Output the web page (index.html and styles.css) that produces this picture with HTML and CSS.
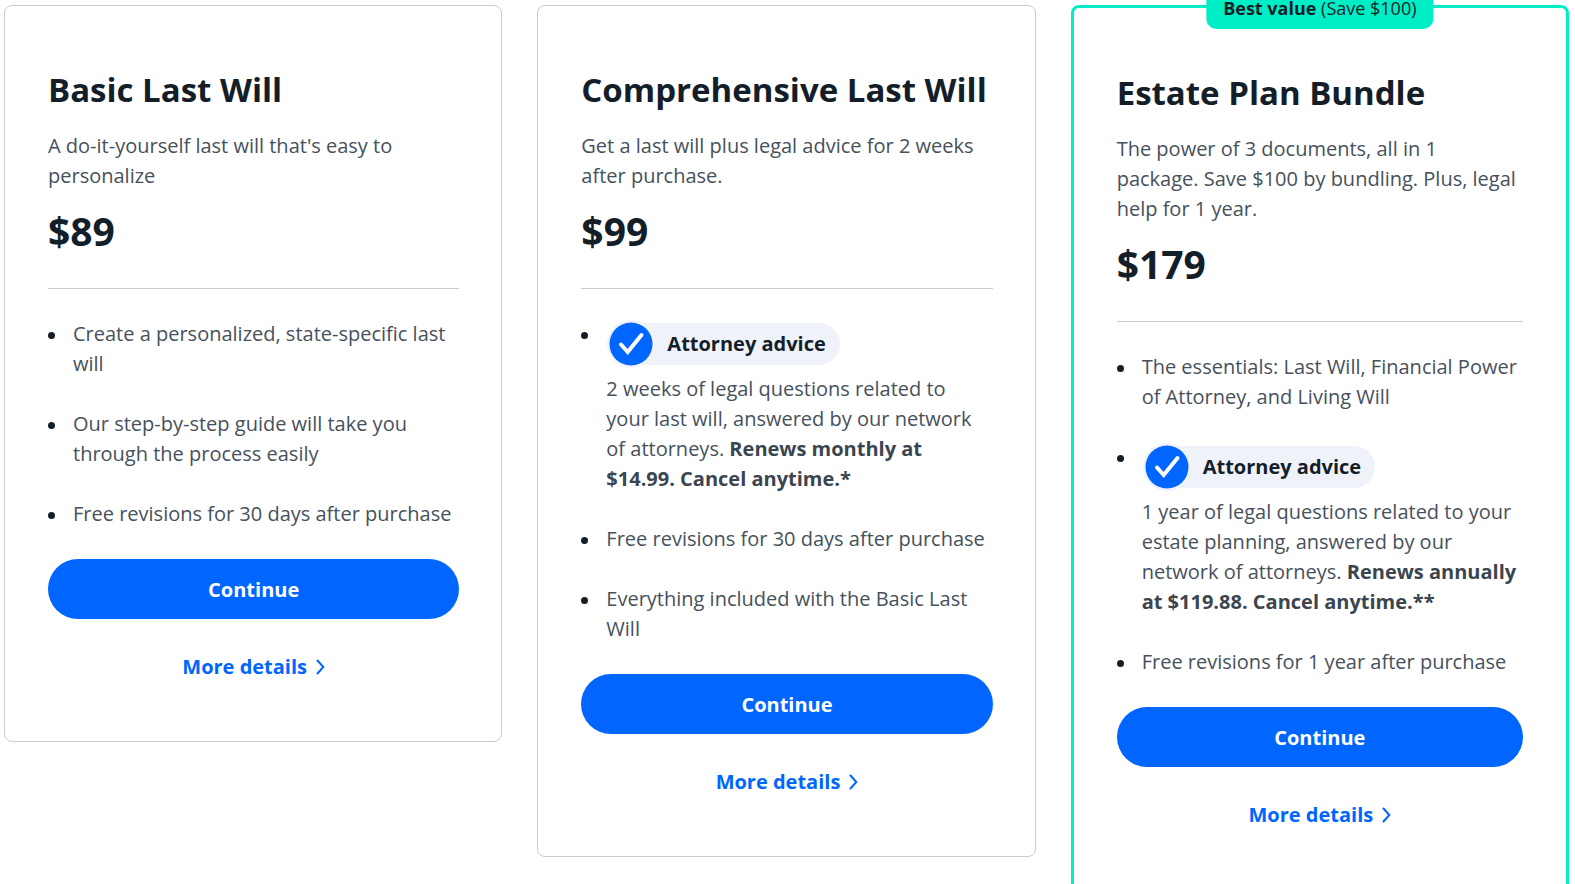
FILE: index.html
```html
<!DOCTYPE html>
<html lang="en">
<head>
    <meta charset="UTF-8">
    <meta name="viewport" content="width=device-width, initial-scale=1.0">
    <title>Last Will Pricing</title>
    <link rel="stylesheet" href="styles.css">
</head>
<body>

    <main class="pricing">
        <section class="card">
            <h2>Basic Last Will</h2>
            <p class="description">A do-it-yourself last will that's easy to personalize</p>
            <p class="price">$89</p>
            <hr>
            <ul class="features">
                <li>Create a personalized, state-specific last will</li>
                <li>Our step-by-step guide will take you through the process easily</li>
                <li>Free revisions for 30 days after purchase</li>
            </ul>
            <button type="button" class="continue">Continue</button>
            <a href="#" class="details">
                More details
                <svg class="chevron" viewBox="0 0 9 16" aria-hidden="true"><path d="M1.5 1.5L7.3 8L1.5 14.5"/></svg>
            </a>
        </section>

        <section class="card">
            <h2>Comprehensive Last Will</h2>
            <p class="description">Get a last will plus legal advice for 2 weeks after purchase.</p>
            <p class="price">$99</p>
            <hr>
            <ul class="features">
                <li>
                    <div class="advice">
                        <svg class="check" viewBox="0 0 48 48" aria-hidden="true">
                            <circle class="check-ring" cx="24" cy="24" r="24"/>
                            <circle class="check-disc" cx="24" cy="24" r="21.5"/>
                            <path class="check-mark" d="M14 24.5L20.7 32L34.5 15"/>
                        </svg>
                        <span class="advice-label">Attorney advice</span>
                    </div>
                    <p>2 weeks of legal questions related to your last will, answered by our network of attorneys. <strong>Renews monthly at $14.99. Cancel anytime.*</strong></p>
                </li>
                <li>Free revisions for 30 days after purchase</li>
                <li>Everything included with the Basic Last Will</li>
            </ul>
            <button type="button" class="continue">Continue</button>
            <a href="#" class="details">
                More details
                <svg class="chevron" viewBox="0 0 9 16" aria-hidden="true"><path d="M1.5 1.5L7.3 8L1.5 14.5"/></svg>
            </a>
        </section>

        <section class="card featured">
            <div class="badge"><strong>Best value</strong> (Save $100)</div>
            <h2>Estate Plan Bundle</h2>
            <p class="description">The power of 3 documents, all in 1 package. Save $100 by bundling. Plus, legal help for 1 year.</p>
            <p class="price">$179</p>
            <hr>
            <ul class="features">
                <li>The essentials: Last Will, Financial Power of Attorney, and Living Will</li>
                <li>
                    <div class="advice">
                        <svg class="check" viewBox="0 0 48 48" aria-hidden="true">
                            <circle class="check-ring" cx="24" cy="24" r="24"/>
                            <circle class="check-disc" cx="24" cy="24" r="21.5"/>
                            <path class="check-mark" d="M14 24.5L20.7 32L34.5 15"/>
                        </svg>
                        <span class="advice-label">Attorney advice</span>
                    </div>
                    <p>1 year of legal questions related to your estate planning, answered by our network of attorneys. <strong>Renews annually at $119.88. Cancel anytime.**</strong></p>
                </li>
                <li>Free revisions for 1 year after purchase</li>
            </ul>
            <button type="button" class="continue">Continue</button>
            <a href="#" class="details">
                More details
                <svg class="chevron" viewBox="0 0 9 16" aria-hidden="true"><path d="M1.5 1.5L7.3 8L1.5 14.5"/></svg>
            </a>
        </section>
    </main>

</body>
</html>
```
FILE: styles.css
```css
body {
    margin: 0;
    font-family: "Open Sans", "Noto Sans", sans-serif;
    font-size: 20px;
    line-height: 30px;
    color: #46515c;
    background-color: #ffffff;
}
.pricing {
    display: grid;
    grid-template-columns: repeat(3, minmax(0, 1fr));
    align-items: start;
    gap: 35px;
    padding: 5px 6px 0 4px;
}
.card {
    position: relative;
    box-sizing: border-box;
    padding: 60px 42px 59px 43px;
    border: 1px solid #c9ccd4;
    border-radius: 8px;
}
.featured {
    padding: 61px 43px 60px;
    border: 3px solid #00eec5;
}
.badge {
    position: absolute;
    top: -18px;
    left: 50%;
    transform: translateX(-50%);
    padding: 5px 17px 7px;
    border-radius: 10px;
    background-color: #00eec5;
    color: #131e29;
    font-size: 18px;
    line-height: 27px;
    white-space: nowrap;
}
h2 {
    margin: 0 0 18px;
    font-size: 33px;
    line-height: 47px;
    font-weight: 700;
    color: #131e29;
}
.description {
    margin: 0;
}
.price {
    margin: 12px 0 30px;
    font-size: 39px;
    line-height: 55px;
    font-weight: 700;
    color: #131e29;
}
hr {
    margin: 0 0 30px;
    border: 0;
    border-top: 1px solid #c9ccd4;
}
.features {
    margin: 0 0 30px;
    padding: 0;
    list-style: none;
}
.features li {
    position: relative;
    padding-left: 25px;
}
.features li + li {
    margin-top: 30px;
}
.features li::before {
    content: "";
    position: absolute;
    top: 13px;
    left: 0;
    width: 7px;
    height: 7px;
    border-radius: 50%;
    background-color: #131e29;
}
.features p {
    margin: 0;
}
strong {
    font-weight: 700;
    color: #3a4550;
}
.badge strong {
    color: #131e29;
}
/* Attorney advice pill */
.advice {
    display: flex;
    align-items: center;
    height: 55px;
    padding: 0 0 6px 1px;
    box-sizing: border-box;
}
.check {
    width: 48px;
    height: 48px;
    flex: none;
    z-index: 1;
}
.check-ring {
    fill: #eff2f8;
}
.check-disc {
    fill: #0066ff;
}
.check-mark {
    fill: none;
    stroke: #ffffff;
    stroke-width: 4;
    stroke-linecap: round;
}
.advice-label {
    margin-left: -24px;
    padding: 6px 14px 6px 36px;
    border-radius: 0 21px 21px 0;
    background-color: #eff2f8;
    color: #131e29;
    font-weight: 700;
}
.continue {
    display: block;
    width: 100%;
    height: 60px;
    border: 0;
    border-radius: 30px;
    background-color: #0066ff;
    color: #ffffff;
    font-family: inherit;
    font-size: 20px;
    font-weight: 700;
    cursor: pointer;
}
.details {
    display: flex;
    justify-content: center;
    align-items: center;
    gap: 9px;
    margin-top: 33px;
    color: #0066ff;
    font-weight: 700;
    text-decoration: none;
}
.chevron {
    width: 9px;
    height: 16px;
    fill: none;
    stroke: #0066ff;
    stroke-width: 2;
    stroke-linecap: round;
}
```
